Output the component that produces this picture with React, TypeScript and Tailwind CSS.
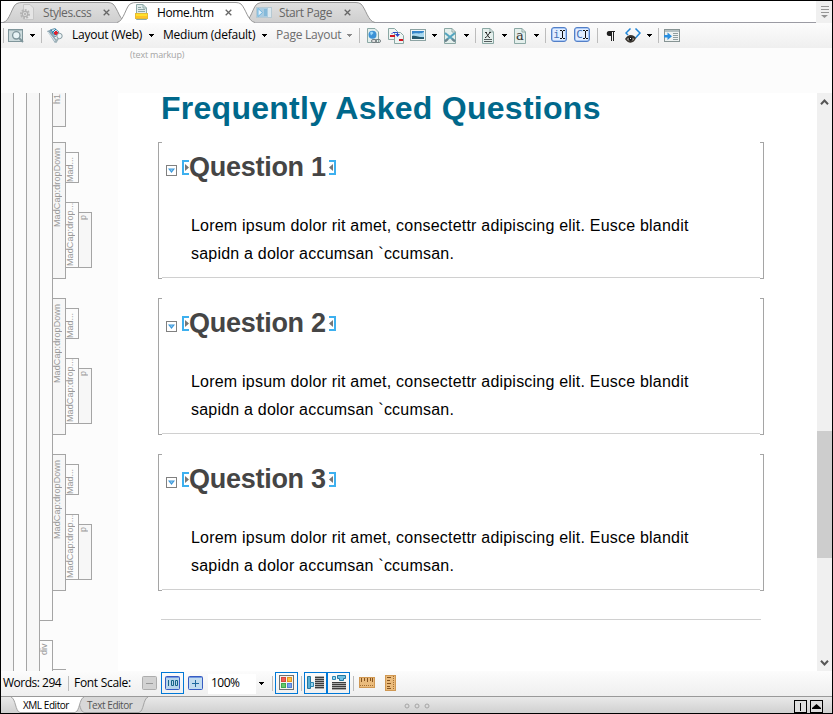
import React from "react";

const ui = "font-['Open_Sans','Noto_Sans',sans-serif] whitespace-nowrap";
const doc = "font-['Liberation_Sans',Arial,sans-serif] whitespace-nowrap";

type IconProps = { className?: string; w?: number; h?: number; children: React.ReactNode };

function Icon({ className = "", w = 16, h = 16, children }: IconProps) {
  return (
    <svg width={w} height={h} viewBox={`0 0 ${w} ${h}`} className={`block shrink-0 ${className}`} fill="none">
      {children}
    </svg>
  );
}

function Sep({ className = "" }: { className?: string }) {
  return <div className={`h-[15px] w-px shrink-0 bg-[#bcbcbc] ${className}`} />;
}

function Arrow({ className = "", color = "#000" }: { className?: string; color?: string }) {
  return (
    <Icon w={5} h={3} className={className}>
      <path d="M0 0H5V1H4V2H3V3H2V2H1V1H0Z" fill={color} shapeRendering="crispEdges" />
    </Icon>
  );
}

function Close() {
  return (
    <Icon w={7} h={7}>
      <path d="M.7.7 6.3 6.3M6.3.7.7 6.3" stroke="#666" strokeWidth="1.3" />
    </Icon>
  );
}

function Page() {
  return <path d="M2.5.5H10L13.5 4V15.5H2.5ZM10 .5V4H13.5" fill="#e4efec" stroke="#8ba8a4" />;
}

function TabShape({ w, active }: { w: number; active?: boolean }) {
  const d = `M0 21.5C7 20.500 9 4 14 2.500Q16 1.500 19 1.500H${w - 19}Q${w - 16} 1.500 ${w - 14} 3C${w - 9} 8 ${w - 7} 20.500 ${w} 21.500`;
  return (
    <svg width={w} height={22} className="absolute top-0 left-0" fill="none">
      <defs>
        <linearGradient id="tabfill" x1="0" y1="0" x2="0" y2="1">
          <stop offset="0" stopColor="#e0e0e0" />
          <stop offset="1" stopColor="#cfcfcf" />
        </linearGradient>
      </defs>
      <path d={active ? d + "V22H0Z" : d} fill={active ? "#fff" : "url(#tabfill)"} />
      <path d={d} stroke="#969696" />
    </svg>
  );
}

function TabBar() {
  const label = `${ui} text-[12px] leading-[16px] shrink-0 mt-[2px]`;
  return (
    <div className="flex h-[22px] shrink-0 bg-white">
      <div className="flex w-[815px] shrink-0 border-b border-[#9b9ba3]">
        <div className="relative ml-[2px] h-[22px] w-[124px] shrink-0">
          <TabShape w={124} />
          <div className="relative flex h-[22px] items-center pl-[16px]">
            <Icon>
              <path d="M4.5.5H11L14.5 4V15.5H4.5Z" fill="#e5e5e5" stroke="#c6c6c6" />
              <circle cx="6" cy="10" r="3.7" stroke="#b4b4b4" strokeWidth="2.6" strokeDasharray="1.7 1.1" />
              <circle cx="6" cy="10" r="2.7" fill="#ddd" stroke="#b0b0b0" strokeWidth="1.2" />
              <circle cx="6" cy="10" r="1" fill="#aaa" />
            </Icon>
            <span className={`${label} ml-[8px] w-[60px] tracking-[-0.45px] text-[#666]`}>Styles.css</span>
            <Close />
          </div>
        </div>
        <div className="relative z-10 -ml-[10px] h-[22px] w-[138px] shrink-0">
          <TabShape w={138} active />
          <div className="relative flex h-[22px] items-center pl-[17px]">
            <Icon>
              <path d="M2.5.5H9L12.5 4V15.5H2.5Z" fill="#e0ebea" stroke="#8eaaa8" />
              <path d="M9 .5V4H12.5" stroke="#8eaaa8" />
              <path d="M4 3.5H7M4 5.5H11M4 7.5H11" stroke="#8fa6a5" />
              <rect x="1.5" y="9.5" width="12" height="5" fill="#ffe22d" stroke="#e5bc34" />
              <path d="M2 12H13V14H2Z" fill="#ffc326" />
            </Icon>
            <span className={`${label} ml-[7px] w-[68px] tracking-[-0.4px] text-black`}>Home.htm</span>
            <Close />
          </div>
        </div>
        <div className="relative -ml-[11px] h-[22px] w-[131px] shrink-0">
          <TabShape w={131} />
          <div className="relative flex h-[22px] items-center pl-[12px]">
            <Icon>
              <rect x=".5" y="3.5" width="15" height="10" fill="#a9cbe0" stroke="#b6c9d3" />
              <rect x="8" y="5" width="3" height="7" fill="#84b9d9" />
              <rect x="12" y="4" width="3" height="9" fill="#dbe8ef" />
              <path d="M2 4.5 6.5 8.5 2 12.5Z" fill="#e2f1fb" stroke="#6eb5df" />
            </Icon>
            <span className={`${label} ml-[7px] w-[65px] tracking-[-0.4px] text-[#666]`}>Start Page</span>
            <Close />
          </div>
        </div>
      </div>
      <div className="flex w-[16px] shrink-0 items-center justify-center bg-[#f0f0f0]">
        <Icon w={9} h={12}>
          <path d="M1 .5H9M1 3.5H9M1 6.5H9" stroke="#969696" />
          <path d="M1 9H8L4.5 12Z" fill="#929292" />
        </Icon>
      </div>
    </div>
  );
}

function BlueCursor({ letter, className }: { letter: string; className: string }) {
  return (
    <div className={`flex h-[15px] w-[16px] shrink-0 items-center justify-center rounded-[3px] border border-[#537fc7] bg-[#a9c8f5] ${className}`}>
      <div className="flex h-[11px] w-[12px] items-center justify-center bg-[#e3eeff]">
        <span className="font-['DejaVu_Sans_Mono',monospace] text-[11px] leading-[11px] text-[#4770b5]">{letter}</span>
        <Icon w={5} h={9}>
          <path d="M0 .5H2M3 .5H5M0 8.5H2M3 8.5H5M2.5 1V8" stroke="#111" />
        </Icon>
      </div>
    </div>
  );
}

function Toolbar() {
  const label = `${ui} text-[12px] leading-[16px] shrink-0 -mt-[2px]`;
  return (
    <div className="flex h-[25px] shrink-0 items-center bg-linear-to-b from-[#fcfcfc] to-[#efefef]">
      <Sep className="ml-[2px]" />
      <Icon className="ml-[4px]">
        <rect x=".5" y="1.5" width="14" height="12" fill="#cddbdd" stroke="#80969b" />
        <path d="M1 2.5H14" stroke="#a9bdc1" />
        <circle cx="8.3" cy="7.3" r="3.7" fill="#e8f4f6" stroke="#7e959b" strokeWidth="1.3" />
        <path d="m11 10 4 4" stroke="#7e959b" strokeWidth="1.8" />
      </Icon>
      <Arrow className="ml-[6px]" />
      <Sep className="ml-[6px]" />
      <Icon className="ml-[5px]">
        <path d="M0 3 3 2 10 13 8 15Z" fill="#8ba3af" />
        <path d="M1 4 9 14" stroke="#dce8ed" strokeWidth="1.2" />
        <path d="M3 2 8 .5 12 4 8 9Z" fill="#d2e8f3" stroke="#6e98ad" />
        <path d="m4 2 4 5M5 5 9 1" stroke="#297da8" />
        <path d="M7 4H8V3H10V4H11V6H10V7H8V6H7Z" fill="#e11f2c" />
        <circle cx="12.500" cy="8" r="2.700" fill="#edf5f7" stroke="#8499a0" />
        <path d="m11 10.500-2.500 4" stroke="#9cb0b7" strokeWidth="2" />
      </Icon>
      <span className={`${label} ml-[9px] w-[72px] tracking-[-0.25px]`}>Layout (Web)</span>
      <Arrow className="ml-[5px]" />
      <span className={`${label} ml-[9px] w-[94px] tracking-[-0.24px]`}>Medium (default)</span>
      <Arrow className="ml-[5px]" />
      <span className={`${label} ml-[9px] w-[66px] tracking-[-0.25px] text-[#6d6d6d]`}>Page Layout</span>
      <Arrow className="ml-[5px]" color="#888" />
      <Sep className="ml-[7px]" />
      <Icon className="ml-[6px]">
        <path d="M1.5.5H9L12.5 4V14.5H1.5Z" fill="#e4efed" stroke="#8ba8a4" />
        <circle cx="6.5" cy="6.8" r="4" fill="#3c92d6" />
        <path d="M4 4.5 6 3.5 7.5 5 5 7.5Z" fill="#9cd9fa" />
        <rect x="5.5" y="11.5" width="5" height="3" rx="1.5" fill="#ddd" stroke="#777f82" />
        <rect x="9.5" y="11.5" width="5" height="3" rx="1.5" stroke="#777f82" />
      </Icon>
      <Icon className="ml-[6px]">
        <path d="M.5.5H6.5L9.5 3.5V11.5H.5Z" fill="#edf4f2" stroke="#8ba8a4" />
        <path d="M6.500 4.500H12.500L15.500 7.500V15.500H6.500Z" fill="#edf4f2" stroke="#8ba8a4" />
        <rect x="2" y="7" width="5" height="2" fill="#d21420" />
        <rect x="11" y="11" width="4" height="2" fill="#d21420" />
        <path d="M4 6V5.500L5 4.500H9.500V8" stroke="#2645c8" />
        <path d="M7 6H12L9.500 9Z" fill="#2645c8" />
      </Icon>
      <Icon className="ml-[6px]">
        <rect x=".5" y="1.500" width="15" height="11" fill="#f1f5f4" stroke="#8ca3a3" />
        <path d="M2 3H14V11H2Z" fill="#3585c9" />
        <path d="M2 6C6 4 9 7 14 4V9H2Z" fill="#a9d8ee" />
        <path d="M2 8C6 7 10 10 14 9V11H2Z" fill="#24586b" />
      </Icon>
      <Arrow className="ml-[6px]" />
      <Icon className="ml-[5px]">
        <Page />
        <path d="m3 5 10 8M13 5 3 13" stroke="#55a5bf" strokeWidth="2.200" />
        <path d="m3 13.500 3-2.500M10 11l3 2.500" stroke="#70848c" strokeWidth="2.200" />
      </Icon>
      <Arrow className="ml-[6px]" />
      <Sep className="ml-[6px]" />
      <Icon className="ml-[4px]">
        <Page />
        <path d="M5 4.500H7M9 4.500H11M6 4.500 9 9.500M10 4.500 6 9.500M5 9.500H6M9 9.500H10" stroke="#333" />
        <path d="M4 11.500H12M4 13.500H12" stroke="#555d5e" />
      </Icon>
      <Arrow className="ml-[6px]" />
      <div className="relative ml-[5px] shrink-0">
        <Icon>
          <Page />
        </Icon>
        <span className="absolute top-[1px] left-[4px] font-['DejaVu_Serif',serif] text-[13px] leading-[14px] text-[#333]">a</span>
      </div>
      <Arrow className="ml-[6px]" />
      <Sep className="ml-[6px]" />
      <BlueCursor letter="i" className="ml-[5px] -mt-[2px]" />
      <BlueCursor letter="C" className="ml-[7px] -mt-[2px]" />
      <Sep className="ml-[7px]" />
      <Icon className="ml-[5px]">
        <path d="M12 3V4H11V13H10V4H9V13H8V8H6C3 8 3 3 6 3Z" fill="#222" />
      </Icon>
      <Icon className="ml-[6px]">
        <path d="M5.500 .5 1 5 3 7M10.500 .5 15 5 10.500 10" stroke="#2186d8" strokeWidth="1.500" />
        <path d="M0 11C3 6 8 6 11 10C9 16 3 16 0 11Z" fill="#39342e" />
        <path d="M1.500 11C4 9 7 9 9.500 11C7 13.500 4 13.500 1.500 11Z" fill="#aaa59b" />
        <circle cx="5.600" cy="11" r="2" fill="#111" />
        <path d="M5 10H6V11H5Z" fill="#fff" />
      </Icon>
      <Arrow className="ml-[6px]" />
      <Sep className="ml-[6px]" />
      <Icon className="ml-[5px]">
        <rect x=".5" y="1.500" width="15" height="12" fill="#eef2f1" stroke="#879494" />
        <path d="M1 3H15" stroke="#b4c0c2" strokeWidth="2" />
        <path d="M9 5.500H14M9 7.500H14M9 9.500H14M9 11.500H14" stroke="#8f9da0" />
        <path d="M0 7H3.500V4.500L8 8.200 3.500 12V9.500H0Z" fill="#2a8fe0" />
      </Icon>
    </div>
  );
}

function VLabel({ className, children }: { className: string; children: React.ReactNode }) {
  return (
    <div className={`w-[13px] shrink-0 border-[#a5a5a5] ${className}`}>
      <div className={`${doc} -ml-px flex h-full w-[10px] rotate-180 justify-end text-[9px] leading-[10px] text-[#999] [writing-mode:vertical-rl]`}>
        {children}
      </div>
    </div>
  );
}

const questions = ["Question 1", "Question 2", "Question 3"];

function StructureBars() {
  return (
    <div className="flex w-[117px] shrink-0 overflow-hidden bg-[#fcfcfc]">
      <div className="w-[13px] border-r border-[#a5a5a5] bg-[#f7f7f7]" />
      <div className="w-[13px] border-r border-[#a5a5a5]" />
      <div className="w-[13px] border-r border-[#a5a5a5] bg-[#f7f7f7]" />
      <div className="w-[13px]">
        <div className="h-[528px] border-r border-b border-[#a5a5a5]" />
        <VLabel className="mt-[19px] h-[31px] border-t border-r pt-[2px]">div</VLabel>
      </div>
      <div className="w-[13px]">
        <VLabel className="h-[34px] border-r border-b bg-[#f7f7f7] pt-px">h1</VLabel>
        {questions.map((q, i) => (
          <VLabel key={q} className={`${i === 0 ? "mt-[15px]" : "mt-[19px]"} h-[137px] border-y border-r bg-[#f7f7f7] pt-[5px]`}>
            <span className="tracking-[0.1px]">MadCap:dropDown</span>
          </VLabel>
        ))}
        <div className="mt-[78px] h-px bg-[#a5a5a5]" />
      </div>
      <div className="w-[13px] pt-[59px]">
        {questions.map((q) => (
          <div key={q} className="h-[156px]">
            <VLabel className="h-[31px] border-y border-r pt-[4px]">Mad...</VLabel>
            <VLabel className="mt-[19px] h-[66px] border-y border-r">
              <span className="tracking-[0.1px]">MadCap:drop...</span>
            </VLabel>
          </div>
        ))}
      </div>
      <div className="w-[13px] pt-[119px]">
        {questions.map((q) => (
          <div key={q} className="h-[156px]">
            <VLabel className="h-[56px] border-y border-r bg-[#f7f7f7] pt-[2px]">p</VLabel>
          </div>
        ))}
      </div>
    </div>
  );
}

function Question({ title }: { title: string }) {
  return (
    <div className="mb-[19px] flex h-[137px] w-[606px]">
      <div className="w-[4px] border-y border-l border-[#a5a5a5]" />
      <div className="h-[136px] w-[598px] border-b border-[#d0d0d0] pl-[4px]">
        <div className="flex h-[70px] items-start pt-[9px]">
          <div className="mt-[14px] flex h-[11px] w-[11px] items-center justify-center border border-[#808080]">
            <Icon w={7} h={5}>
              <path d="M0 .5H7L3.500 5Z" fill="#3996da" />
              <path d="M2 1.500H5L3.500 3Z" fill="#9bd3f5" />
            </Icon>
          </div>
          <Icon w={7} h={15} className="mt-[9px] ml-[5px]">
            <path d="M7 1H1V14H7" stroke="#3db0ef" strokeWidth="2" />
            <path d="M3 4 7 7.500 3 11Z" fill="#777" />
          </Icon>
          <h2 className={`${doc} w-[140px] text-[27px] leading-[32px] font-bold tracking-[-0.27px] text-[#454545]`}>{title}</h2>
          <Icon w={7} h={15} className="mt-[9px]">
            <path d="M0 1H6V14H0" stroke="#3db0ef" strokeWidth="2" />
            <path d="M4 4 0 7.500 4 11Z" fill="#777" />
          </Icon>
        </div>
        <p className={`${doc} pl-[25px] text-[16px] leading-[28px] tracking-[0.21px] text-black`}>
          Lorem ipsum dolor rit amet, consectettr adipiscing elit. Eusce blandit
          <br />
          sapidn a dolor accumsan `ccumsan.
        </p>
      </div>
      <div className="w-[4px] border-y border-r border-[#a5a5a5]" />
    </div>
  );
}

function Scrollbar() {
  return (
    <div className="flex w-[15px] shrink-0 flex-col items-center bg-[#f0f0f0]">
      <Icon w={9} h={6} className="mt-[6px]">
        <path d="M1 5.200 4.500 1.500 8 5.200" stroke="#555" strokeWidth="2" />
      </Icon>
      <div className="mt-[326px] h-[127px] w-full bg-[#cdcdcd]" />
      <Icon w={9} h={6} className="mt-[102px]">
        <path d="M1 .8 4.500 4.500 8 .8" stroke="#555" strokeWidth="2" />
      </Icon>
    </div>
  );
}

function Editor() {
  return (
    <div className="flex h-[578px] shrink-0">
      <StructureBars />
      <div className="w-[699px] shrink-0 bg-white pl-[40px]">
        <h1 className={`${doc} mb-[18px] h-[31px] pl-[3px] text-[32px] leading-[31px] font-bold tracking-[0.27px] text-[#00688b]`}>
          Frequently Asked Questions
        </h1>
        {questions.map((q) => (
          <Question key={q} title={q} />
        ))}
        <div className="mt-[28px] ml-[3px] h-px w-[600px] bg-[#d0d0d0]" />
      </div>
      <Scrollbar />
    </div>
  );
}

function Toggle({ className = "", children }: { className?: string; children: React.ReactNode }) {
  return (
    <div className={`flex h-[22px] w-[23px] shrink-0 items-center justify-center border border-[#0078d7] ${className}`}>
      {children}
    </div>
  );
}

function StatusBar() {
  const label = `${ui} text-[12px] leading-[16px] shrink-0 -mt-[2px]`;
  return (
    <div className="flex h-[25px] shrink-0 items-center bg-linear-to-b from-[#fcfcfc] to-[#efefef]">
      <span className={`${label} ml-[2px] w-[60px] tracking-[-0.5px]`}>Words: 294</span>
      <Sep className="ml-[5px]" />
      <span className={`${label} ml-[5px] w-[59px] tracking-[-0.3px]`}>Font Scale:</span>
      <Icon w={15} h={14} className="-mt-[2px] ml-[9px]">
        <rect x=".5" y=".5" width="14" height="13" rx="1" fill="#d2d2d2" stroke="#adadad" />
        <path d="M4 7.500H11" stroke="#989898" />
      </Icon>
      <Toggle className="-mt-[2px] ml-[4px]">
        <Icon w={15} h={14}>
          <rect x=".5" y=".5" width="14" height="13" rx="1" fill="#b8d5eb" stroke="#375cc2" />
          <path d="M1 1.500H14" stroke="#7398df" />
          <path d="M3.500 4V10M6.500 4.500H8.500V9.500H6.500ZM10.500 4.500H12.500V9.500H10.500Z" stroke="#176487" />
        </Icon>
      </Toggle>
      <Icon w={15} h={14} className="-mt-[2px] ml-[4px]">
        <rect x=".5" y=".5" width="14" height="13" rx="1" fill="#c2dcf0" stroke="#375cc2" />
        <path d="M1 1.500H14" stroke="#7398df" />
        <path d="M4 7.500H11M7.500 4V11" stroke="#20699f" />
      </Icon>
      <div className="ml-[5px] flex h-[20px] w-[48px] items-center bg-white pl-[3px]">
        <span className={`${label} tracking-[-0.5px]`}>100%</span>
      </div>
      <Arrow className="ml-[3px]" />
      <Sep className="ml-[8px]" />
      <Toggle className="-mt-[2px] ml-[2px]">
        <Icon w={15} h={15}>
          <rect x=".5" y=".5" width="14" height="14" fill="#f3f3ed" stroke="#6a7175" />
          <rect x="2.500" y="2.500" width="4" height="4" fill="#f25d55" stroke="#d7463c" />
          <rect x="8.500" y="2.500" width="4" height="4" fill="#ffc13b" stroke="#e39222" />
          <rect x="2.500" y="8.500" width="4" height="4" fill="#67c86b" stroke="#3fa851" />
          <rect x="8.500" y="8.500" width="4" height="4" fill="#78a4f0" stroke="#547fd5" />
        </Icon>
      </Toggle>
      <Sep className="ml-[3px]" />
      <Toggle className="-mt-[2px] ml-[2px]">
        <Icon w={17} h={15}>
          <path d="M.5 1.500H3.500V13.500H.5Z" fill="#57aed5" stroke="#24769e" />
          <path d="M3.500 7.500H6.500V11.500H3.500Z" fill="#9cd8f0" stroke="#2b86b2" />
          <path d="M8 1H17V14H8Z" fill="#a9a9a9" />
          <path d="M8 2.500H17M8 4.500H17M8 6.500H17M8 8.500H17M8 10.500H17M8 12.500H17" stroke="#3c3c3c" />
        </Icon>
      </Toggle>
      <Toggle className="-mt-[2px]">
        <Icon w={15} h={15}>
          <path d="M1.500 1.500H4.500V4.500H1.500Z" fill="#9cd8f0" stroke="#2b86b2" />
          <path d="M6.500.5H14.500V3.500H12.500V5.500H8.500V3.500H6.500Z" fill="#6fc0e4" stroke="#24769e" />
          <path d="M1 7H15V15H1Z" fill="#a9a9a9" />
          <path d="M1 7.500H15M1 9.500H15M1 11.500H15M1 13.500H15" stroke="#3c3c3c" />
        </Icon>
      </Toggle>
      <Sep className="ml-[3px]" />
      <Icon w={16} h={11} className="-mt-[3px] ml-[5px]">
        <rect x=".5" y=".5" width="15" height="10" fill="#eabb7c" stroke="#d09853" />
        <path d="M2.500 1V5M5.500 1V4M8.500 1V5M11.500 1V4M13.500 1V5" stroke="#85531f" />
        <path d="M1 8.500H15" stroke="#a46d31" strokeDasharray="1 1" />
      </Icon>
      <Icon w={11} h={16} className="-mt-px ml-[10px]">
        <rect x=".5" y=".5" width="10" height="15" fill="#eabb7c" stroke="#d09853" />
        <path d="M2 2.500H6M2 5.500H5M2 8.500H6M2 11.500H5M2 13.500H6" stroke="#85531f" />
        <path d="M8.500 1V15" stroke="#a46d31" strokeDasharray="1 1" />
      </Icon>
    </div>
  );
}

function BottomTab({ w, active, className, children }: { w: number; active?: boolean; className: string; children: string }) {
  const d = `M0 0C5 2 4 14 9 15.500H${w - 9}C${w - 4} 14 ${w - 5} 2 ${w} 0`;
  return (
    <div className={`relative h-[16px] shrink-0 pl-[12px] ${className}`}>
      <svg width={w} height={16} className="absolute top-0 left-0">
        <path d={d} fill={active ? "#fff" : "#d8d8d8"} stroke="#a3a3a3" />
      </svg>
      <div className={`${ui} relative text-[10px] leading-[17px] ${active ? "tracking-[-0.45px] text-black" : "tracking-[-0.45px] text-[#555]"}`}>
        {children}
      </div>
    </div>
  );
}

function BottomBar() {
  return (
    <div className="flex h-[17px] shrink-0 border-t border-[#999] bg-linear-to-b from-[#e9e9e9] to-[#d0d0d0]">
      <BottomTab w={73} active className="z-10 ml-[10px] w-[73px]">XML Editor</BottomTab>
      <BottomTab w={73} className="-ml-[9px] w-[73px]">Text Editor</BottomTab>
      <Icon w={26} h={6} className="mt-[6px] ml-[256px]">
        <circle cx="3" cy="3" r="2" stroke="#a5a5a5" />
        <circle cx="13" cy="3" r="2" stroke="#a5a5a5" />
        <circle cx="23" cy="3" r="2" stroke="#a5a5a5" />
      </Icon>
      <div className="mt-[3px] ml-[364px] flex h-[13px] w-[13px] items-center justify-center border border-black bg-[#dedede]">
        <div className="h-[8px] w-px bg-black" />
      </div>
      <div className="mt-[3px] ml-[3px] flex h-[13px] w-[13px] items-center justify-center border border-black bg-[#dedede]">
        <Icon w={9} h={5}>
          <path d="M4.500 0 9 4V5H0V4Z" fill="#000" />
        </Icon>
      </div>
    </div>
  );
}

export default function App() {
  return (
    <div className="flex h-[714px] w-[833px] flex-col overflow-hidden border border-black bg-white text-black">
      <TabBar />
      <Toolbar />
      <div className="h-[45px] shrink-0 bg-[#fcfcfc] pl-[129px]">
        <span className={`${ui} block text-[9px] leading-[14px] tracking-[-0.18px] text-[#a5a5a5]`}>(text markup)</span>
      </div>
      <Editor />
      <StatusBar />
      <BottomBar />
    </div>
  );
}
